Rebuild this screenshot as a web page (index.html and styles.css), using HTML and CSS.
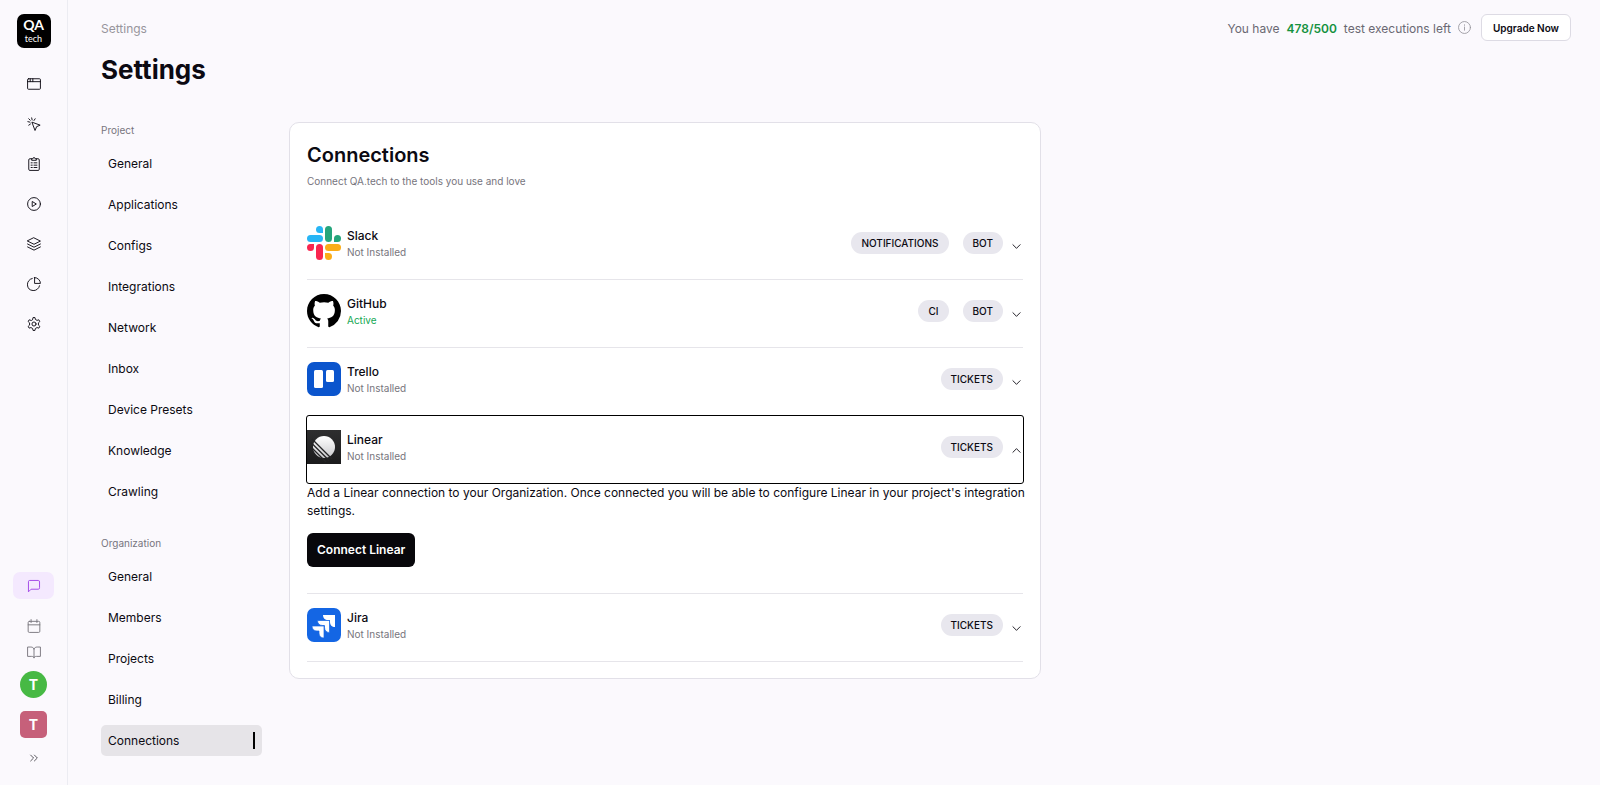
FILE: index.html
```
<!DOCTYPE html>
<html lang="en">
<head>
    <meta charset="UTF-8">
    <meta name="viewport" content="width=device-width, initial-scale=1.0">
    <title>Settings - QA.tech</title>
    <link rel="stylesheet" href="styles.css">
</head>
<body>
    <div class="app">
        <aside class="rail">
            <a href="#" class="logo" aria-label="QA.tech home">
                <span class="logo-top">QA</span>
                <span class="logo-bottom">tech</span>
            </a>
            <nav class="rail-nav" aria-label="Main">
                <a href="#" aria-label="Overview">
                    <svg class="icon" viewBox="0 0 24 24"><rect x="1" y="3" width="22" height="18" rx="1.5"/><path d="M1 8h22M5.5 3v5M10 3v5"/></svg>
                </a>
                <a href="#" aria-label="Tests">
                    <svg class="icon" viewBox="0 0 24 24"><path d="M9 9l13.5 5-6 2.5-2.5 6zM8 1.500l.8 3.500M1.500 8l3.500.8M14 3l-2 3M3 14l3-2M3 3l2.500 2.500"/></svg>
                </a>
                <a href="#" aria-label="Test plans">
                    <svg class="icon" viewBox="0 0 24 24"><path d="M8 3H5a2 2 0 0 0-2 2v16a2 2 0 0 0 2 2h14a2 2 0 0 0 2-2V5a2 2 0 0 0-2-2h-3"/><path d="M8 5V3h2a2 2 0 0 1 4 0h2v2zM7 10h2M12 10h5M7 14h2M12 14h5M7 18h2M12 18h5"/></svg>
                </a>
                <a href="#" aria-label="Runs">
                    <svg class="icon" viewBox="0 0 24 24"><circle cx="12" cy="12" r="11"/><path d="M9.500 8l6.500 4-6.500 4z"/></svg>
                </a>
                <a href="#" aria-label="Environments">
                    <svg class="icon" viewBox="0 0 24 24"><path d="M12 1.500L23 7l-11 5.500L1 7zM1 12l11 5.500L23 12M1 17l11 5.500L23 17"/></svg>
                </a>
                <a href="#" aria-label="Reports">
                    <svg class="icon" viewBox="0 0 24 24"><path d="M9 2.500A10.500 10.500 0 1 0 21.500 15"/><path d="M13 1v10h10A10 10 0 0 0 13 1z"/></svg>
                </a>
                <a href="#" aria-label="Settings">
                    <svg class="icon" viewBox="0 0 24 24"><path d="M9.600 4.200L10.300 1h3.400l.7 3.200 2.800 1.600 3.100-1 1.700 3-2.400 2.200v3.900l2.400 2.200-1.700 3-3.100-1-2.800 1.600-.7 3.300h-3.400l-.7-3.300-2.800-1.600-3.100 1-1.700-3 2.400-2.200V10L2 7.800l1.700-3 3.100 1z"/><circle cx="12" cy="12" r="3.500"/></svg>
                </a>
            </nav>
            <div class="rail-bottom">
                <button type="button" class="chat" aria-label="Chat">
                    <svg class="icon" viewBox="0 0 24 24"><path d="M21.500 15.500a2 2 0 0 1-2 2H7l-4.500 4.500V4.500a2 2 0 0 1 2-2h15a2 2 0 0 1 2 2z"/></svg>
                </button>
                <a href="#" class="muted-link" aria-label="Schedule">
                    <svg class="icon" viewBox="0 0 24 24"><rect x="2" y="4" width="20" height="19" rx="2"/><path d="M7 1v5M17 1v5M2 10h20"/></svg>
                </a>
                <a href="#" class="muted-link" aria-label="Documentation">
                    <svg class="icon" viewBox="0 0 24 24"><path d="M12 6.500C11 4.500 9 3.500 6.500 3.500H1v16h7c2 0 4 .8 4 2.500 0-1.700 2-2.500 4-2.500h7v-16h-5.500c-2.500 0-4.500 1-5.500 3zM12 6.500V22"/></svg>
                </a>
                <button type="button" class="avatar avatar-user" aria-label="Account">T</button>
                <button type="button" class="avatar avatar-org" aria-label="Organization">T</button>
                <button type="button" class="expand" aria-label="Expand sidebar">
                    <svg class="icon" viewBox="0 0 24 24"><path d="M4 5l7 7-7 7M13 5l7 7-7 7"/></svg>
                </button>
            </div>
        </aside>

        <div class="page">
            <header class="topbar">
                <a href="#" class="crumb">Settings</a>
                <div class="usage">
                    <span>You have</span>
                    <strong>478/500</strong>
                    <span>test executions left</span>
                    <svg class="icon info" viewBox="0 0 24 24"><circle cx="12" cy="12" r="11"/><path d="M12 11v6M12 7v1"/></svg>
                    <button type="button" class="upgrade">Upgrade Now</button>
                </div>
            </header>
            <h1>Settings</h1>

            <div class="columns">
                <nav class="side-nav" aria-label="Settings">
                    <section>
                        <h2>Project</h2>
                        <a href="#">General</a>
                        <a href="#">Applications</a>
                        <a href="#">Configs</a>
                        <a href="#">Integrations</a>
                        <a href="#">Network</a>
                        <a href="#">Inbox</a>
                        <a href="#">Device Presets</a>
                        <a href="#">Knowledge</a>
                        <a href="#">Crawling</a>
                    </section>
                    <section>
                        <h2>Organization</h2>
                        <a href="#">General</a>
                        <a href="#">Members</a>
                        <a href="#">Projects</a>
                        <a href="#">Billing</a>
                        <a href="#" class="active" aria-current="page">Connections</a>
                    </section>
                </nav>

                <main class="card">
                    <h2>Connections</h2>
                    <p class="subtitle">Connect QA.tech to the tools you use and love</p>

                    <div class="item">
                        <button type="button" class="row" aria-expanded="false">
                            <svg class="brand" viewBox="0 0 34 34">
                                <g fill="#27b5f5"><path d="M12.500 0a3.500 3.500 0 0 1 3.500 3.500V7h-3.500a3.500 3.500 0 0 1 0-7z"/><rect y="9" width="16" height="7" rx="3.500"/></g>
                                <g fill="#25a57c"><rect x="18" width="7" height="16" rx="3.500"/><path d="M34 12.500a3.500 3.500 0 0 1-3.500 3.500H27v-3.500a3.500 3.500 0 0 1 7 0z"/></g>
                                <g fill="#f9264f"><rect x="9" y="18" width="7" height="16" rx="3.500"/><path d="M0 21.500A3.500 3.500 0 0 1 3.500 18H7v3.500a3.500 3.500 0 0 1-7 0z"/></g>
                                <g fill="#fbad18"><rect x="18" y="18" width="16" height="7" rx="3.500"/><path d="M18 27h3.500a3.500 3.500 0 1 1-3.500 3.500z"/></g>
                            </svg>
                            <span class="info-text"><span class="name">Slack</span><span class="status">Not Installed</span></span>
                            <span class="badge">NOTIFICATIONS</span>
                            <span class="badge">BOT</span>
                            <svg class="icon chevron" viewBox="0 0 10 10"><path d="M1 3l4 4 4-4"/></svg>
                        </button>
                    </div>

                    <div class="item">
                        <button type="button" class="row" aria-expanded="false">
                            <svg class="brand" viewBox="0 0 16 16"><path d="M8 0C3.580 0 0 3.580 0 8c0 3.540 2.290 6.530 5.470 7.590.4.070.55-.17.55-.38 0-.19-.01-.82-.01-1.490-2.010.37-2.530-.49-2.690-.94-.09-.23-.48-.94-.82-1.130-.28-.15-.68-.52-.01-.53.63-.01 1.080.58 1.230.82.72 1.210 1.870.87 2.330.66.07-.52.28-.87.51-1.070-1.780-.2-3.640-.89-3.640-3.950 0-.87.31-1.590.82-2.150-.08-.2-.36-1.020.08-2.120 0 0 .67-.21 2.200.82.64-.18 1.320-.27 2-.27s1.360.09 2 .27c1.530-1.040 2.200-.82 2.200-.82.44 1.100.16 1.920.08 2.120.51.56.82 1.270.82 2.150 0 3.070-1.870 3.750-3.650 3.950.29.25.54.73.54 1.480 0 1.070-.01 1.930-.01 2.200 0 .21.15.46.55.38A8.010 8.010 0 0 0 16 8c0-4.420-3.580-8-8-8z"/></svg>
                            <span class="info-text"><span class="name">GitHub</span><span class="status status-active">Active</span></span>
                            <span class="badge">CI</span>
                            <span class="badge">BOT</span>
                            <svg class="icon chevron" viewBox="0 0 10 10"><path d="M1 3l4 4 4-4"/></svg>
                        </button>
                    </div>

                    <div class="item">
                        <button type="button" class="row" aria-expanded="false">
                            <svg class="brand" viewBox="0 0 34 34"><rect width="34" height="34" rx="7" fill="#0b55cd"/><rect x="7" y="8" width="9" height="18" rx="1.5" fill="#fff"/><rect x="19" y="8" width="8" height="12" rx="1.5" fill="#fff"/></svg>
                            <span class="info-text"><span class="name">Trello</span><span class="status">Not Installed</span></span>
                            <span class="badge">TICKETS</span>
                            <svg class="icon chevron" viewBox="0 0 10 10"><path d="M1 3l4 4 4-4"/></svg>
                        </button>
                    </div>

                    <div class="item">
                        <button type="button" class="row row-focused" aria-expanded="true" aria-controls="linear-panel">
                            <svg class="brand" viewBox="0 0 34 34">
                                <defs>
                                    <linearGradient id="linear-bg" x2="0" y2="1"><stop stop-color="#2e2e2f"/><stop offset="1" stop-color="#1b1b1c"/></linearGradient>
                                    <linearGradient id="linear-fg" x2="0" y2="1"><stop stop-color="#fff"/><stop offset="1" stop-color="#c9c9cc"/></linearGradient>
                                </defs>
                                <rect width="34" height="34" fill="url(#linear-bg)"/>
                                <circle cx="17" cy="17" r="11" fill="url(#linear-fg)"/>
                                <path d="M5 9l20 20M4 12.500l18 18M3 16l16 16" fill="none" stroke="#242425" stroke-width="1.3"/>
                            </svg>
                            <span class="info-text"><span class="name">Linear</span><span class="status">Not Installed</span></span>
                            <span class="badge">TICKETS</span>
                            <svg class="icon chevron" viewBox="0 0 10 10"><path d="M1 7l4-4 4 4"/></svg>
                        </button>
                        <div class="panel" id="linear-panel">
                            <p>Add a Linear connection to your Organization. Once connected you will be able to configure Linear in your project's integration settings.</p>
                            <button type="button" class="connect">Connect Linear</button>
                        </div>
                    </div>

                    <div class="item">
                        <button type="button" class="row" aria-expanded="false">
                            <svg class="brand" viewBox="0 0 34 34">
                                <rect width="34" height="34" rx="7" fill="#1466e4"/>
                                <g fill="#fff"><path d="M16 7h12v12c-3 0-5-2-5-5v-2h-2c-3 0-5-2-5-5z"/><path d="M10.500 12.500h12v12c-3 0-5-2-5-5v-2h-2c-3 0-5-2-5-5z" stroke="#1466e4" stroke-width=".7"/><path d="M5 18h12v12c-3 0-5-2-5-5v-2h-2c-3 0-5-2-5-5z" stroke="#1466e4" stroke-width=".7"/></g>
                            </svg>
                            <span class="info-text"><span class="name">Jira</span><span class="status">Not Installed</span></span>
                            <span class="badge">TICKETS</span>
                            <svg class="icon chevron" viewBox="0 0 10 10"><path d="M1 3l4 4 4-4"/></svg>
                        </button>
                    </div>
                </main>
            </div>
        </div>
    </div>
</body>
</html>
```
FILE: styles.css
```
* {
    box-sizing: border-box;
}
body {
    margin: 0;
    font-family: Inter, 'Liberation Sans', sans-serif;
    font-size: 12px;
    line-height: 18px;
    color: #0c0a12;
    background: #fbf9fd;
}
h1, h2, p {
    margin: 0;
}
a {
    color: inherit;
    text-decoration: none;
}
button {
    font: inherit;
    color: inherit;
    border: none;
    background: none;
    padding: 0;
    cursor: pointer;
}
.app {
    display: flex;
    min-height: 100vh;
}
.icon {
    display: block;
    width: 14px;
    height: 14px;
    fill: none;
    stroke: currentColor;
    stroke-width: 1.6;
    stroke-linecap: round;
    stroke-linejoin: round;
}

/* Icon rail */
.rail {
    flex: none;
    width: 68px;
    padding: 14px 0 22px;
    border-right: 1px solid #ececf2;
    display: flex;
    flex-direction: column;
    align-items: center;
}
.logo {
    width: 34px;
    height: 34px;
    padding-bottom: 1px;
    border-radius: 7px;
    background: #000;
    color: #fff;
    display: flex;
    flex-direction: column;
    align-items: center;
    justify-content: center;
    font-family: Lato, sans-serif;
}
.logo-top {
    font-size: 14px;
    line-height: 16px;
    font-weight: 700;
}
.logo-bottom {
    font-size: 9px;
    line-height: 11px;
}
.rail-nav {
    margin-top: 29px;
    display: flex;
    flex-direction: column;
    gap: 26px;
}
.rail-bottom {
    margin-top: auto;
    display: flex;
    flex-direction: column;
    align-items: center;
}
.chat {
    width: 41px;
    height: 27px;
    border-radius: 7px;
    background: #f4e9fe;
    color: #a044e6;
    display: grid;
    place-items: center;
    margin-bottom: 20px;
}
.muted-link {
    color: #77757d;
    margin-bottom: 12px;
}
.avatar {
    width: 27px;
    height: 27px;
    color: #fff;
    font-size: 14px;
    font-weight: 700;
}
.avatar-user {
    border-radius: 50%;
    background: #47b944;
    margin-bottom: 13px;
}
.avatar-org {
    border-radius: 5px;
    background: #c6607a;
    margin-bottom: 15px;
}
.expand .icon {
    width: 10px;
    height: 10px;
}

/* Page */
.page {
    flex: 1;
    min-width: 0;
    padding: 14px 29px 20px 33px;
}
.topbar {
    display: flex;
    align-items: center;
    justify-content: space-between;
}
.crumb {
    padding-top: 2px;
    color: #97959c;
}
.usage {
    display: flex;
    align-items: center;
    gap: 7px;
    color: #6a6872;
}
.usage span,
.usage strong {
    padding-top: 2px;
}
.usage strong {
    font-weight: 600;
    color: #15923f;
}
.info {
    width: 13px;
    height: 13px;
    color: #97959c;
}
.upgrade {
    height: 27px;
    margin-left: 3px;
    padding: 0 11px;
    border: 1px solid #dddbe4;
    border-radius: 6px;
    background: #fff;
    font-size: 10px;
    font-weight: 600;
    color: #0c0a12;
}
h1 {
    margin-top: 12px;
    font-size: 26px;
    line-height: 34px;
    font-weight: 700;
}
.columns {
    margin-top: 35px;
    display: flex;
    align-items: flex-start;
    gap: 27px;
}

/* Settings menu */
.side-nav {
    flex: none;
    width: 161px;
    display: flex;
    flex-direction: column;
    gap: 28px;
}
.side-nav section {
    display: flex;
    flex-direction: column;
    gap: 10px;
}
.side-nav h2 {
    font-size: 10px;
    line-height: 16px;
    font-weight: 400;
    color: #77757d;
}
.side-nav a {
    padding: 6px 7px;
    border-radius: 5px;
    line-height: 19px;
}
.side-nav .active {
    display: flex;
    justify-content: space-between;
    align-items: center;
    background: #e6e4e8;
}
.side-nav .active::after {
    content: "";
    width: 2px;
    height: 17px;
    background: #000;
}

/* Connections card */
.card {
    flex: 0 1 752px;
    min-width: 0;
    padding: 18px 17px 16px;
    border: 1px solid #e2e0e8;
    border-radius: 10px;
    background: #fff;
}
.card h2 {
    font-size: 20px;
    line-height: 28px;
    font-weight: 600;
}
.subtitle {
    margin: 3px 0 22px;
    font-size: 10px;
    color: #77757d;
}
.item {
    border-bottom: 1px solid #e6e5ea;
}
.row {
    width: 100%;
    display: flex;
    align-items: center;
    padding: 14px 2px 19px 0;
    text-align: left;
}
.row-focused {
    border-radius: 2px;
    outline: 1px solid #000;
}
.brand {
    display: block;
    width: 34px;
    height: 34px;
}
.info-text {
    flex: 1;
    margin-left: 6px;
    padding-top: 2px;
    display: flex;
    flex-direction: column;
}
.name {
    line-height: 16px;
    font-weight: 500;
}
.status {
    font-size: 10px;
    line-height: 16px;
    color: #77757d;
}
.status-active {
    color: #14a854;
}
.badge {
    margin-left: 14px;
    padding: 0 10px;
    border-radius: 11px;
    background: #e8e7ee;
    font-size: 10px;
    line-height: 22px;
    font-weight: 500;
}
.chevron {
    width: 9px;
    height: 9px;
    margin: 6px 0 0 9px;
    stroke-width: 1;
}
.panel {
    padding: 1px 0 26px;
}
/* the text runs a little into the card's right padding */
.panel p {
    margin-right: -12px;
}
.connect {
    margin-top: 13px;
    height: 34px;
    padding: 0 10px;
    border-radius: 6px;
    background: #08070b;
    color: #fff;
    font-weight: 600;
}
```
